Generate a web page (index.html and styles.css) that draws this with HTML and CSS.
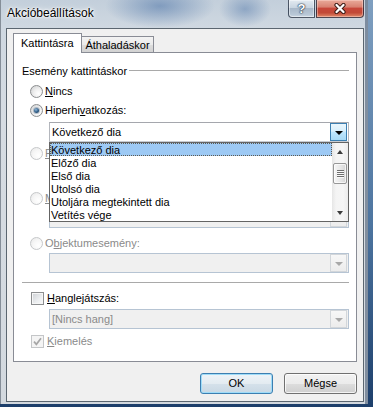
FILE: index.html
```html
<!DOCTYPE html>
<html lang="hu">
<head>
<meta charset="utf-8">
<title>Akcióbeállítások</title>
<link rel="stylesheet" href="styles.css">
</head>
<body>
<div class="win">
  <div class="titlebar">
    <span class="title">Akcióbeállítások</span>
    <div class="caps">
      <div class="cap help">?</div>
      <div class="cap close">
        <svg width="14" height="11" viewBox="0 0 14 11"><path d="M3.5 2 L10.5 9 M10.5 2 L3.5 9" stroke="#3a1a14" stroke-width="4.2" stroke-linecap="round"/><path d="M3.5 2 L10.5 9 M10.5 2 L3.5 9" stroke="#ffffff" stroke-width="2.3" stroke-linecap="round"/></svg>
      </div>
    </div>
  </div>
  <div class="client">
    <div class="tabs">
      <div class="tab tab-sel">Kattintásra</div>
      <div class="tab tab-off">Áthaladáskor</div>
    </div>
    <div class="panel">
      <div class="group"><span>Esemény kattintáskor</span><i class="gline"></i></div>

      <div class="row r-none"><span class="radio"></span><span><u>N</u>incs</span></div>
      <div class="row r-link"><span class="radio on"></span><span>Hiperhi<u>v</u>atkozás:</span></div>

      <div class="dd">
        <div class="combo">
          <span class="ctext">Következő dia</span>
          <span class="arrow hot"></span>
        </div>
        <div class="list">
          <div class="opts">
            <div class="opt sel">Következő dia</div>
            <div class="opt">Előző dia</div>
            <div class="opt">Első dia</div>
            <div class="opt">Utolsó dia</div>
            <div class="opt">Utoljára megtekintett dia</div>
            <div class="opt">Vetítés vége</div>
          </div>
          <div class="sb">
            <div class="sb-btn"><i class="tri-up"></i></div>
            <div class="sb-thumb"><i class="grip"></i></div>
            <div class="sb-fill"></div>
            <div class="sb-btn"><i class="tri-dn"></i></div>
          </div>
        </div>
      </div>

      <div class="row r-prog dis"><span class="radio off"></span><span><u>P</u>rogram futtatása:</span></div>
      <div class="tbox tb-prog"></div>

      <div class="row r-macro dis"><span class="radio off"></span><span><u>M</u>akró futtatása:</span></div>
      <div class="combo dcombo cb-macro"><span class="ctext"></span><span class="arrow"></span></div>

      <div class="row r-obj dis"><span class="radio off"></span><span>O<u>b</u>jektumesemény:</span></div>
      <div class="combo dcombo cb-obj"><span class="ctext"></span><span class="arrow"></span></div>

      <div class="sep"></div>

      <div class="row crow r-sound"><span class="cb"></span><span><u>H</u>anglejátszás:</span></div>
      <div class="combo dcombo cb-sound"><span class="ctext">[Nincs hang]</span><span class="arrow"></span></div>

      <div class="row crow r-hl dis"><span class="cb cb-dis"><svg width="11" height="11" viewBox="0 0 11 11"><path d="M2 5.6 L4.4 8.3 L9 2.3" fill="none" stroke="#a6a6a6" stroke-width="1.7"/></svg></span><span><u>K</u>iemelés</span></div>
    </div>
    <div class="btns">
      <div class="btn def">OK</div>
      <div class="btn">Mégse</div>
    </div>
  </div>
</div>
</body>
</html>
```

FILE: styles.css
```css
html, body {
  margin: 0;
  padding: 0;
}
body {
  width: 373px;
  height: 407px;
  overflow: hidden;
  background: linear-gradient(to bottom, #7f9fc0 0%, #4d75a0 55%, #1d3f6b 100%);
  font: 11px/13px "Liberation Sans", Arial, sans-serif;
  color: #000;
}

.win {
  width: 368px;
  height: 404px;
  display: flex;
  flex-direction: column;
  background:
    radial-gradient(ellipse 55px 22px at 160px 6px, rgba(72, 112, 165, 0.55), rgba(72, 112, 165, 0)),
    radial-gradient(ellipse 26px 18px at 245px 9px, rgba(72, 112, 165, 0.45), rgba(72, 112, 165, 0)),
    linear-gradient(to bottom, #c3cfdb 0px, #cfd8e1 28px, #d6dce2 120px, #d3d9df 404px);
  box-shadow: inset 1px 0 0 #858e98, inset -3px 0 0 rgba(60, 80, 105, 0.55);
}

/* title bar */
.titlebar {
  height: 28px;
  display: flex;
  align-items: flex-start;
  flex: none;
}
.title {
  padding: 5px 0 0 7px;
  font-size: 12px;
  line-height: 16px;
  text-shadow: 0 0 6px #fff, 0 0 3px #fff, 0 0 2px #fff;
}
.caps {
  margin-left: auto;
  margin-right: 4px;
  display: flex;
  gap: 1px;
}
.cap {
  height: 18px;
  box-sizing: border-box;
  border: 1px solid rgba(30, 40, 58, 0.75);
  border-top: 0;
  display: flex;
  align-items: center;
  justify-content: center;
}
.help {
  width: 27px;
  border-radius: 0 0 0 4px;
  background: linear-gradient(#e3eaf1 0%, #c9d5e1 45%, #a9b9ca 50%, #b8c7d6 85%, #cbd8e4 100%);
  color: #fff;
  font: bold 13px/16px "Liberation Sans", Arial, sans-serif;
  text-shadow: 0 0 2px #23354a, 0 0 1px #23354a, 0 0 1px #23354a;
  box-shadow: inset 0 0 0 1px rgba(255, 255, 255, 0.45);
}
.close {
  width: 48px;
  border-radius: 0 0 4px 0;
  background: linear-gradient(#e9aa9a 0%, #d98373 40%, #c7473a 50%, #c24a37 75%, #e08a6a 100%);
  box-shadow: inset 0 0 0 1px rgba(255, 220, 210, 0.45);
}

/* client area */
.client {
  margin: 0 4px 0 6px;
  height: 374px;
  box-sizing: border-box;
  border: 1px solid #5b6670;
  background: #f0f0f0;
  padding: 4px 6px 0;
  flex: none;
}

/* tabs */
.tabs {
  display: flex;
  align-items: flex-end;
  height: 19px;
}
.tab {
  box-sizing: border-box;
  border: 1px solid #898c95;
  border-bottom: 0;
  white-space: nowrap;
}
.tab-sel {
  width: 69px;
  height: 20px;
  margin-bottom: -1px;
  padding: 3px 0 0 7px;
  background: #fff;
  position: relative;
  z-index: 1;
}
.tab-off {
  width: 73px;
  height: 16px;
  margin-left: -1px;
  padding-top: 2px;
  text-align: center;
  background: linear-gradient(#f3f3f3 0%, #ebebeb 50%, #dddddd 51%, #d2d2d2 100%);
}

/* panel */
.panel {
  width: 344px;
  height: 310px;
  box-sizing: border-box;
  border: 1px solid #898c95;
  background: #fff;
  padding: 12px 7px 13px 8px;
  display: flex;
  flex-direction: column;
}
.group {
  display: flex;
  height: 13px;
  gap: 2px;
  white-space: nowrap;
}
.gline {
  flex: 1;
  height: 1px;
  margin-top: 5px;
  background: #a9a9a9;
}

.row {
  display: flex;
  align-items: center;
  height: 13px;
  padding-left: 8px;
  gap: 2px;
  white-space: nowrap;
  flex: none;
}
.crow {
  padding-left: 9px;
  gap: 3px;
}
.dis {
  color: #8a8a8a;
}

.r-none { margin-top: 7px; }
.r-link { margin-top: 6px; }
.dd { margin-top: 5px; }
.r-prog { margin-top: 5px; }
.tb-prog { margin-top: 3px; }
.r-macro { margin-top: 9px; }
.cb-macro { margin-top: 3px; }
.r-obj { margin-top: 9px; }
.cb-obj { margin-top: 3px; }
.sep { margin-top: 9px; }
.r-sound { margin-top: 9px; }
.cb-sound { margin-top: 4px; }
.r-hl { margin-top: 6px; }

/* radio + checkbox */
.radio {
  width: 13px;
  height: 13px;
  box-sizing: border-box;
  border-radius: 50%;
  border: 1px solid #8c8e90;
  background: radial-gradient(circle at 68% 68%, #ffffff 0%, #eeeeee 45%, #c9cbcd 100%);
  flex: none;
  display: flex;
  align-items: center;
  justify-content: center;
}
.radio.on::after {
  content: "";
  width: 5px;
  height: 5px;
  border-radius: 50%;
  background: radial-gradient(circle at 40% 35%, #8fb6d8 0%, #2d5b85 55%, #1a3450 100%);
  box-shadow: 0 0 0 1px rgba(60, 90, 120, 0.35);
}
.radio.off {
  border-color: #c6c8ca;
  background: radial-gradient(circle at 68% 68%, #ffffff 0%, #f6f6f6 50%, #e6e6e6 100%);
}
.cb {
  width: 13px;
  height: 13px;
  box-sizing: border-box;
  border: 1px solid #8c8e90;
  background: linear-gradient(135deg, #cdd0d4 0%, #eceef0 60%, #fafafa 100%);
  box-shadow: inset 0 0 0 1px #f6f6f6;
  flex: none;
  display: flex;
  align-items: center;
  justify-content: center;
}
.cb-dis {
  border-color: #c4c6c8;
  background: #f4f4f4;
  box-shadow: none;
}

/* combos */
.dd {
  position: relative;
  margin-left: 27px;
  width: 300px;
  flex: none;
}
.combo {
  box-sizing: border-box;
  height: 20px;
  width: 300px;
  border: 1px solid #abadb3;
  border-color: #a5a7ad #c9ccd2 #dfe3e8 #c9ccd2;
  background: #fff;
  display: flex;
  align-items: center;
  flex: none;
}
.dd .combo {
  border-color: #a5a7ad #b4b7bd #c8ccd2 #b4b7bd;
}
.ctext {
  padding-left: 2px;
  line-height: 18px;
  white-space: nowrap;
}
.arrow {
  margin-left: auto;
  margin-right: 1px;
  width: 17px;
  height: 18px;
  box-sizing: border-box;
  border: 1px solid #d2d6da;
  background: linear-gradient(#f7f7f7, #ececec);
  display: flex;
  align-items: center;
  justify-content: center;
}
.arrow::after {
  content: "";
  border-left: 4px solid transparent;
  border-right: 4px solid transparent;
  border-top: 4px solid #a8a8a8;
  margin-top: 1px;
}
.arrow.hot {
  border-color: #3c7fb1;
  background: linear-gradient(#eaf6fd 0%, #d9f0fc 45%, #bee6fd 50%, #a7d9f5 100%);
}
.arrow.hot::after {
  border-top-color: #000;
}
.dcombo {
  margin-left: 27px;
  border: 1px solid #b6c4d3;
  background: #f0f0f0;
  color: #8a8a8a;
}
.tbox {
  margin-left: 27px;
  width: 300px;
  height: 20px;
  box-sizing: border-box;
  border: 1px solid #b6c4d3;
  background: #f0f0f0;
  flex: none;
}
.sep {
  height: 1px;
  background: #a9a9a9;
  flex: none;
}

/* dropdown list (overlays the controls below) */
.list {
  position: absolute;
  left: 0;
  top: 20px;
  z-index: 2;
  width: 300px;
  height: 80px;
  box-sizing: border-box;
  border: 1px solid #646464;
  background: #fff;
  display: flex;
}
.opts {
  width: 282px;
}
.opt {
  height: 13px;
  box-sizing: border-box;
  padding: 1px 0 0 1px;
  line-height: 13px;
  white-space: nowrap;
}
.opt.sel {
  background: #9dc9f4;
  outline: 1px dotted #5e5a50;
  outline-offset: -1px;
}
.sb {
  width: 16px;
  display: flex;
  flex-direction: column;
  background: linear-gradient(to right, #e6e6e6 0%, #f4f4f4 25%, #f6f6f6 70%, #ececec 100%);
}
.sb-btn {
  height: 17px;
  display: flex;
  align-items: center;
  justify-content: center;
  flex: none;
}
.tri-up {
  border-left: 3.5px solid transparent;
  border-right: 3.5px solid transparent;
  border-bottom: 4px solid #3c3c3c;
}
.tri-dn {
  border-left: 3.5px solid transparent;
  border-right: 3.5px solid transparent;
  border-top: 4px solid #3c3c3c;
}
.sb-thumb {
  margin: 3px 1px 0;
  height: 21px;
  box-sizing: border-box;
  border: 1px solid #979797;
  border-radius: 2px;
  background: linear-gradient(to right, #f6f6f6 0%, #e9e9e9 50%, #d6d6d6 100%);
  box-shadow: inset 0 0 0 1px rgba(255, 255, 255, 0.7);
  display: flex;
  align-items: center;
  justify-content: center;
  flex: none;
}
.grip {
  width: 7px;
  height: 8px;
  background: repeating-linear-gradient(to bottom, #6f6f6f 0px, #6f6f6f 1px, #fafafa 1px, #fafafa 2px);
}
.sb-fill {
  flex: 1;
}

/* buttons */
.btns {
  display: flex;
  justify-content: flex-end;
  gap: 11px;
  margin-top: 11px;
}
.btn {
  width: 73px;
  height: 21px;
  box-sizing: border-box;
  border: 1px solid #707070;
  border-radius: 3px;
  display: flex;
  align-items: center;
  justify-content: center;
  background: linear-gradient(#f2f2f2 0%, #ebebeb 50%, #dddddd 51%, #cfcfcf 100%);
  box-shadow: inset 0 0 0 1px rgba(255, 255, 255, 0.75);
}
.btn.def {
  border-color: #3c7fb1;
  background: linear-gradient(#eef4f8 0%, #e3ebf1 50%, #d5e1ea 51%, #c9d8e4 100%);
  box-shadow: inset 0 0 0 1px #9fdcf8;
}
```
